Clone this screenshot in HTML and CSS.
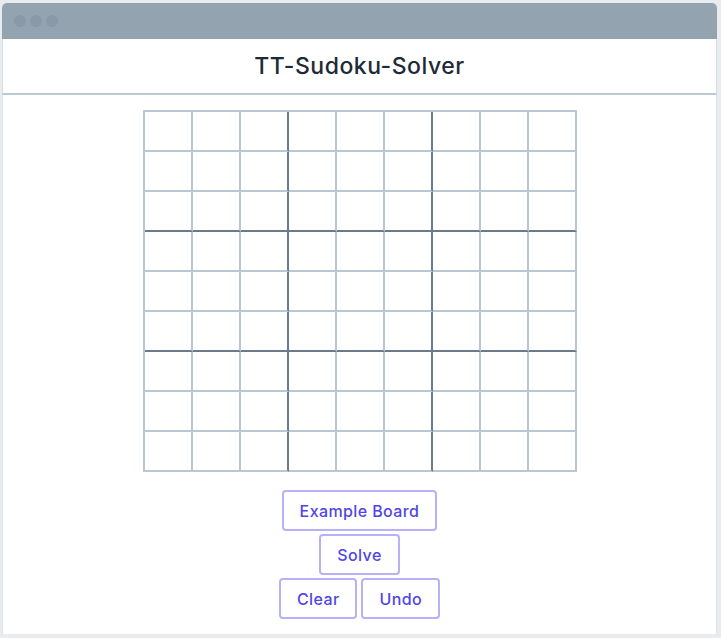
FILE: index.html
```html
<!DOCTYPE html>
<html>
<head>
<meta charset="utf-8">
<title>TT-Sudoku-Solver</title>
<link rel="stylesheet" href="styles.css">
</head>
<body>
<div class="window">
  <div class="titlebar">
    <span class="dot"></span><span class="dot"></span><span class="dot"></span>
  </div>
  <header class="header"><h1>TT-Sudoku-Solver</h1></header>
  <main class="content">
    <div class="board" id="board"></div>
    <div class="controls">
      <div class="row"><button class="btn">Example Board</button></div>
      <div class="row"><button class="btn">Solve</button></div>
      <div class="row"><button class="btn">Clear</button><button class="btn">Undo</button></div>
    </div>
  </main>
</div>
<script src="script.js"></script>
</body>
</html>
```
FILE: script.js
```js
var board = document.getElementById('board');
for (var r = 0; r < 9; r++) {
  for (var c = 0; c < 9; c++) {
    var d = document.createElement('div');
    d.className = 'cell' + ((c === 2 || c === 5) ? ' thick-r' : '') + ((r === 2 || r === 5) ? ' thick-b' : '');
    board.appendChild(d);
  }
}
```
FILE: styles.css
```css
html, body {
  margin: 0;
  padding: 0;
}
body {
  background: #e8ecef;
  font-family: Inter, "Noto Sans", sans-serif;
  width: 721px;
  height: 638px;
  overflow: hidden;
}
.window {
  margin: 3px 4px 0 2px;
  width: 715px;
  height: 631px;
  background: #fff;
  border-radius: 5px 5px 0 0;
  box-sizing: border-box;
  display: flex;
  flex-direction: column;
  overflow: hidden;
}
.titlebar {
  height: 36px;
  background: #94a3b0;
  display: flex;
  align-items: center;
  gap: 4px;
  padding-left: 12px;
  box-sizing: border-box;
}
.dot {
  width: 12px;
  height: 12px;
  border-radius: 50%;
  background: #8a99a7;
}
.header {
  height: 56px;
  box-sizing: border-box;
  border-bottom: 2px solid #bcc8d4;
  border-left: 1px solid #d5dde4;
  border-right: 1px solid #d5dde4;
  display: flex;
  align-items: center;
  justify-content: center;
}
.header h1 {
  margin: 0;
  font-size: 23px;
  font-weight: 500;
  color: #1e2a36;
  letter-spacing: 0.5px;
}
.content {
  flex: 1;
  border-left: 1px solid #dde3e9;
  border-right: 1px solid #dde3e9;
  display: flex;
  flex-direction: column;
  align-items: center;
  padding-top: 15px;
}
.board {
  display: grid;
  grid-template-columns: repeat(9, 48px);
  grid-auto-rows: 40px;
  border-left: 2px solid #bac6d2;
  border-top: 2px solid #bac6d2;
}
.cell {
  border-right: 2px solid #bac6d2;
  border-bottom: 2px solid #bac6d2;
}
.cell.thick-r { border-right-color: #6c7b89; }
.cell.thick-b { border-bottom-color: #6c7b89; }
.controls {
  margin-top: 18px;
  display: flex;
  flex-direction: column;
  align-items: center;
  gap: 3px;
}
.row {
  display: flex;
  gap: 4px;
}
.btn {
  font-family: Inter, "Noto Sans", sans-serif;
  font-size: 16px;
  font-weight: 500;
  letter-spacing: 0.4px;
  color: #5145e6;
  background: #fff;
  border: 2px solid #b7b2f7;
  border-radius: 4px;
  height: 41px;
  padding: 0 16px;
  cursor: pointer;
}
```
